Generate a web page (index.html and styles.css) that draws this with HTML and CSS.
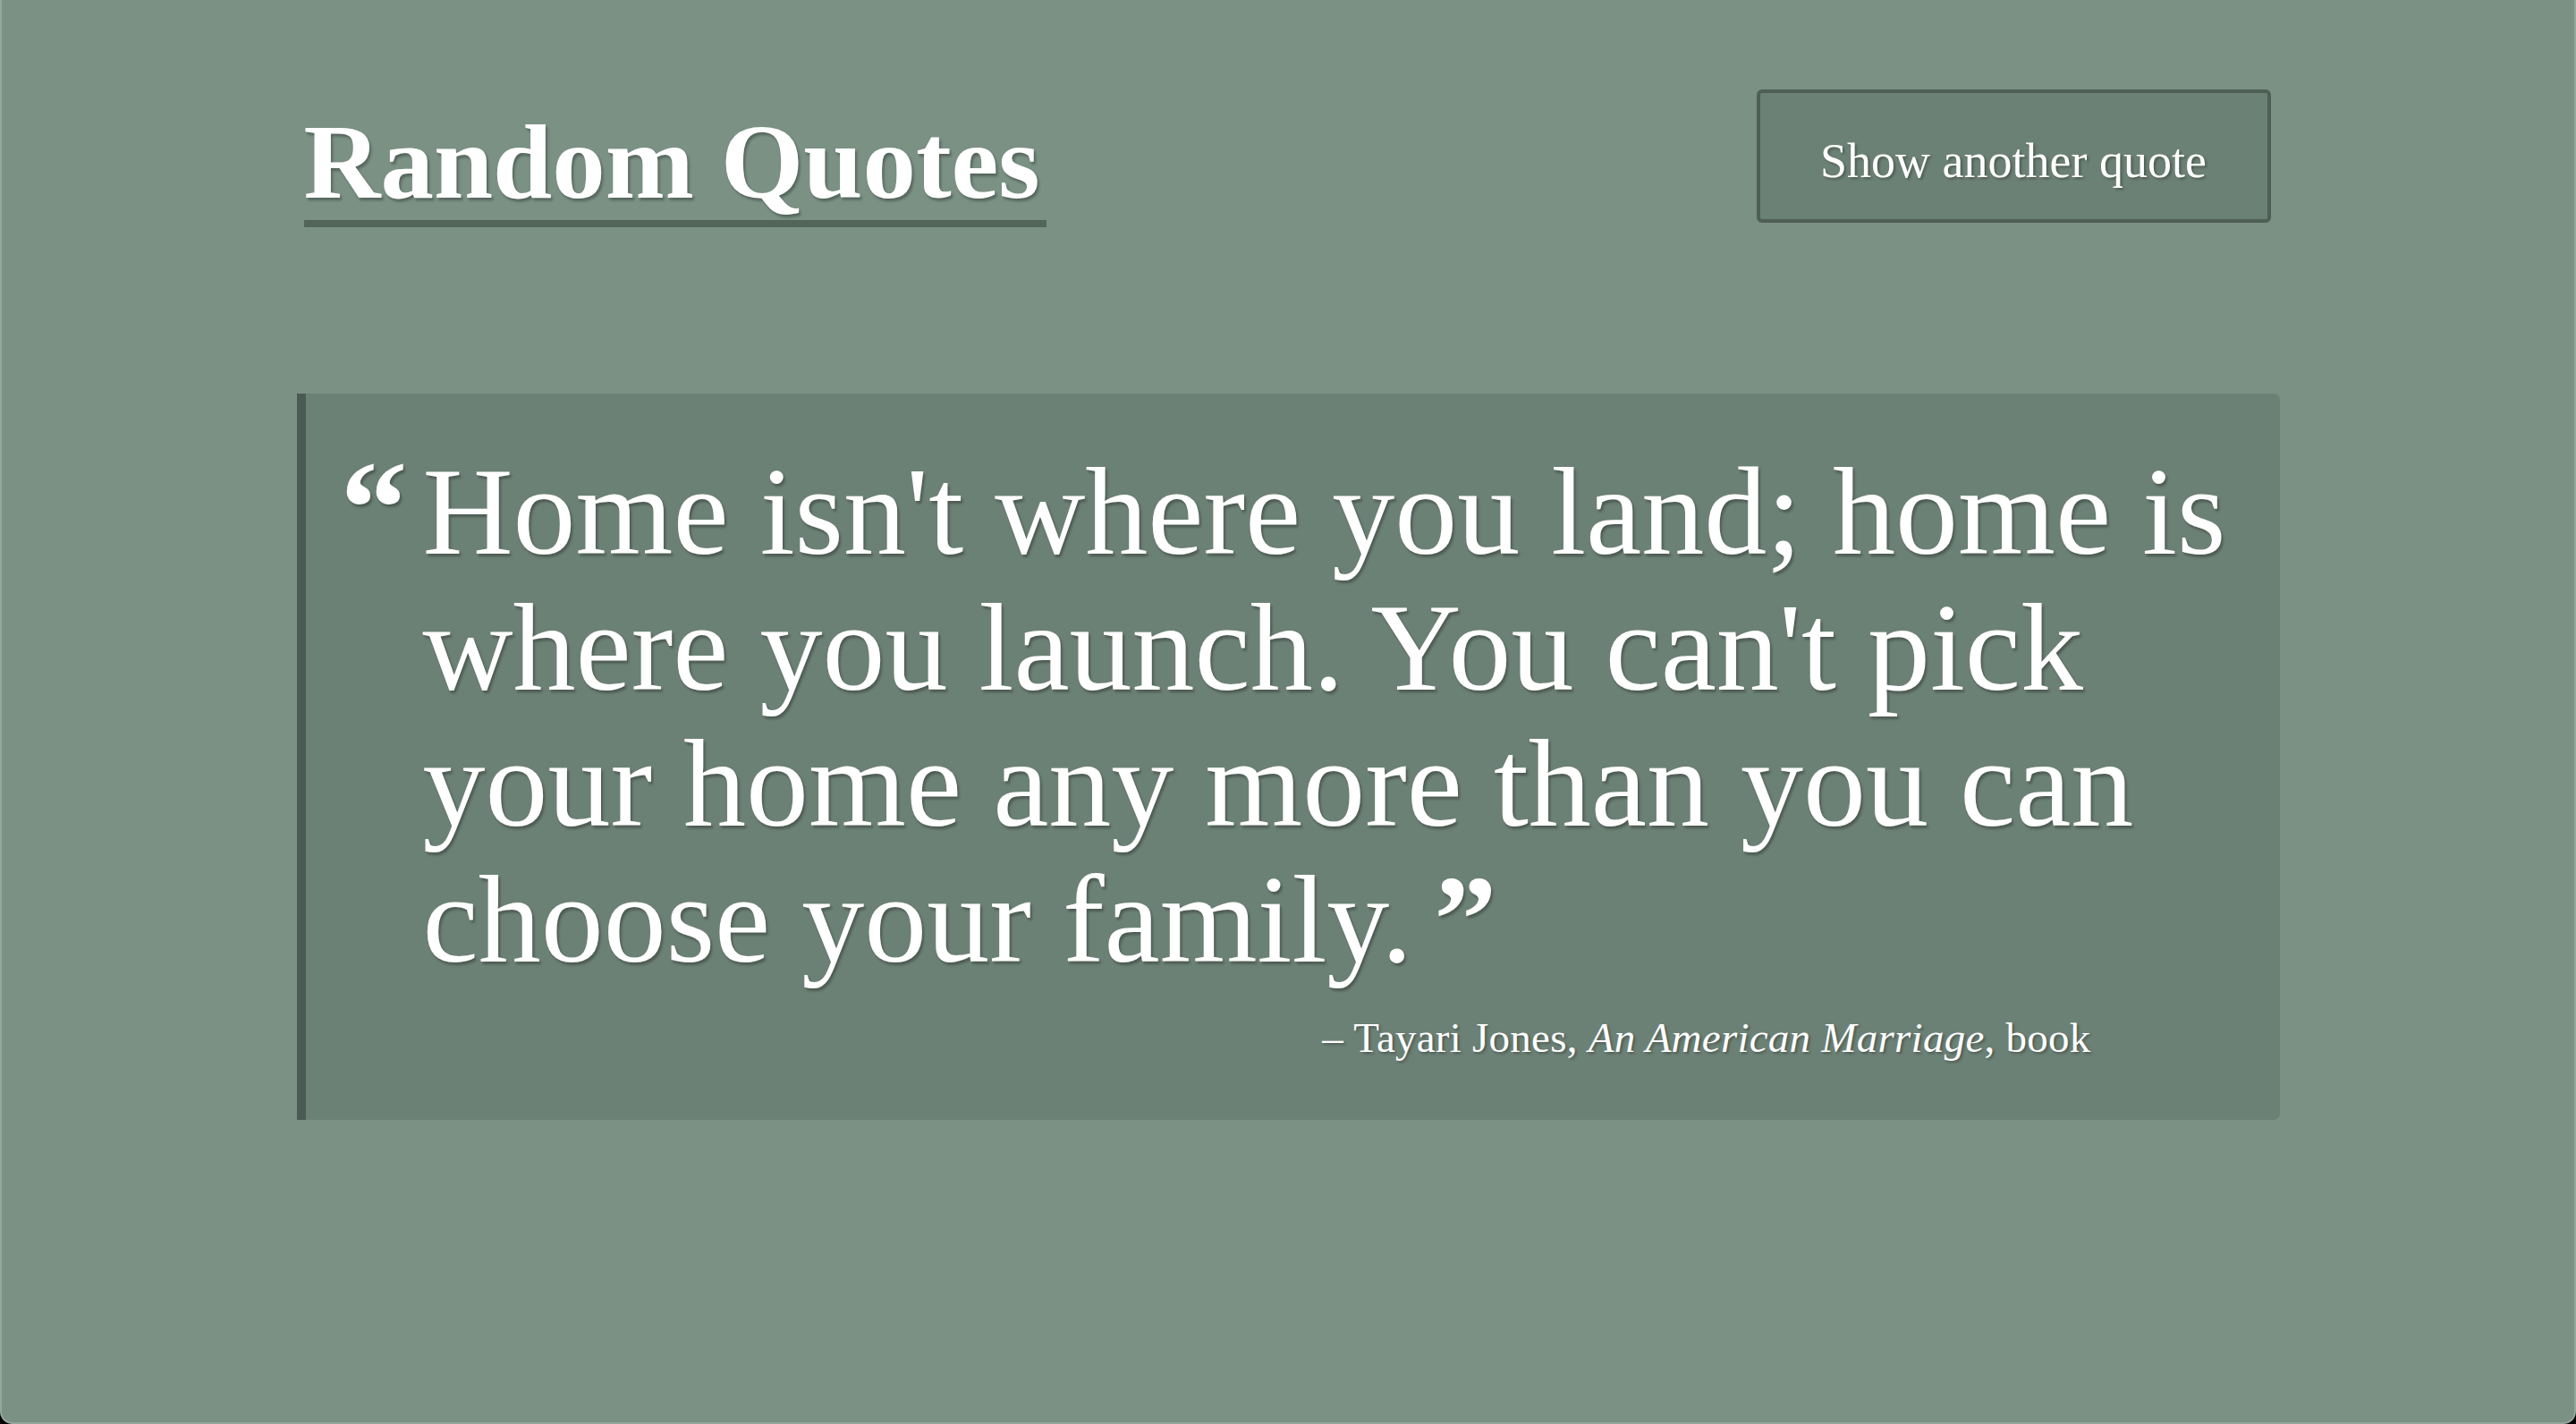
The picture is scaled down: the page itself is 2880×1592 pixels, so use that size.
FILE: index.html
```html
<!DOCTYPE html>
<html lang="en">
<head>
<meta charset="utf-8">
<title>Random Quotes</title>
<link rel="stylesheet" href="styles.css">
</head>
<body>
<div class="page">
  <div class="container">
    <header class="header">
      <h1 class="title">Random Quotes</h1>
      <button class="btn" type="button">Show another quote</button>
    </header>
    <blockquote class="quote">
      <div class="quote-body">
        <span class="qmark">“</span>
        <p class="quote-text">Home isn't where you land; home is where you launch. You can't pick your home any more than you can choose your family.<span class="qmark-close">”</span></p>
      </div>
      <footer class="cite">– Tayari Jones, <cite class="work">An American Marriage</cite>, book</footer>
    </blockquote>
  </div>
</div>
</body>
</html>
```

FILE: styles.css
```css
html, body {
  margin: 0;
  padding: 0;
  background: #000;
  overflow: hidden;
}

.page {
  box-sizing: border-box;
  height: 1592px;
  background: #7a9184;
  border: 2px solid #95a79c;
  border-top: none;
  border-radius: 0 0 14px 14px;
  font-family: "Liberation Serif", "Times New Roman", serif;
  color: #fff;
}

.container {
  width: 2217px;
  margin: 0 auto;
}

.header {
  display: flex;
  justify-content: space-between;
  align-items: flex-start;
  padding: 100px 10px 0 8px;
}

.title {
  margin: 22px 0 0;
  padding: 0 7px 5px 0;
  font-size: 119px;
  font-weight: 700;
  line-height: 119px;
  border-bottom: 8px solid #536559;
  text-shadow: 2px 3px 3px rgba(0, 0, 0, 0.3);
}

.btn {
  box-sizing: border-box;
  width: 575px;
  height: 149px;
  padding: 10px 0 0;
  background: #6c8175;
  border: 4px solid #4e5f55;
  border-radius: 6px;
  color: #fff;
  font-family: "Liberation Serif", "Times New Roman", serif;
  font-size: 54px;
  text-shadow: 2px 2px 3px rgba(0, 0, 0, 0.3);
  cursor: pointer;
}

.quote {
  margin: 186px 0 0;
  background: #6c8175;
  border-left: 10px solid #4b5a52;
  border-radius: 0 7px 7px 0;
  padding: 52px 39px 61px 39px;
}

.quote-body {
  display: flex;
  align-items: baseline;
}

.qmark {
  flex: 0 0 92px;
  font-size: 150px;
  font-weight: 700;
  line-height: 152px;
  text-shadow: 2px 3px 3px rgba(0, 0, 0, 0.3);
}

.quote-text {
  flex: 1;
  margin: 0;
  font-size: 140px;
  line-height: 152px;
  text-shadow: 2px 3px 3px rgba(0, 0, 0, 0.3);
}

.qmark-close {
  font-weight: 700;
  margin-left: 24px;
}

.cite {
  margin-top: 26px;
  padding-right: 172px;
  text-align: right;
  font-size: 47px;
  line-height: 61px;
  letter-spacing: 0.25px;
  text-shadow: 2px 2px 3px rgba(0, 0, 0, 0.3);
}

.work {
  font-style: italic;
}
```
